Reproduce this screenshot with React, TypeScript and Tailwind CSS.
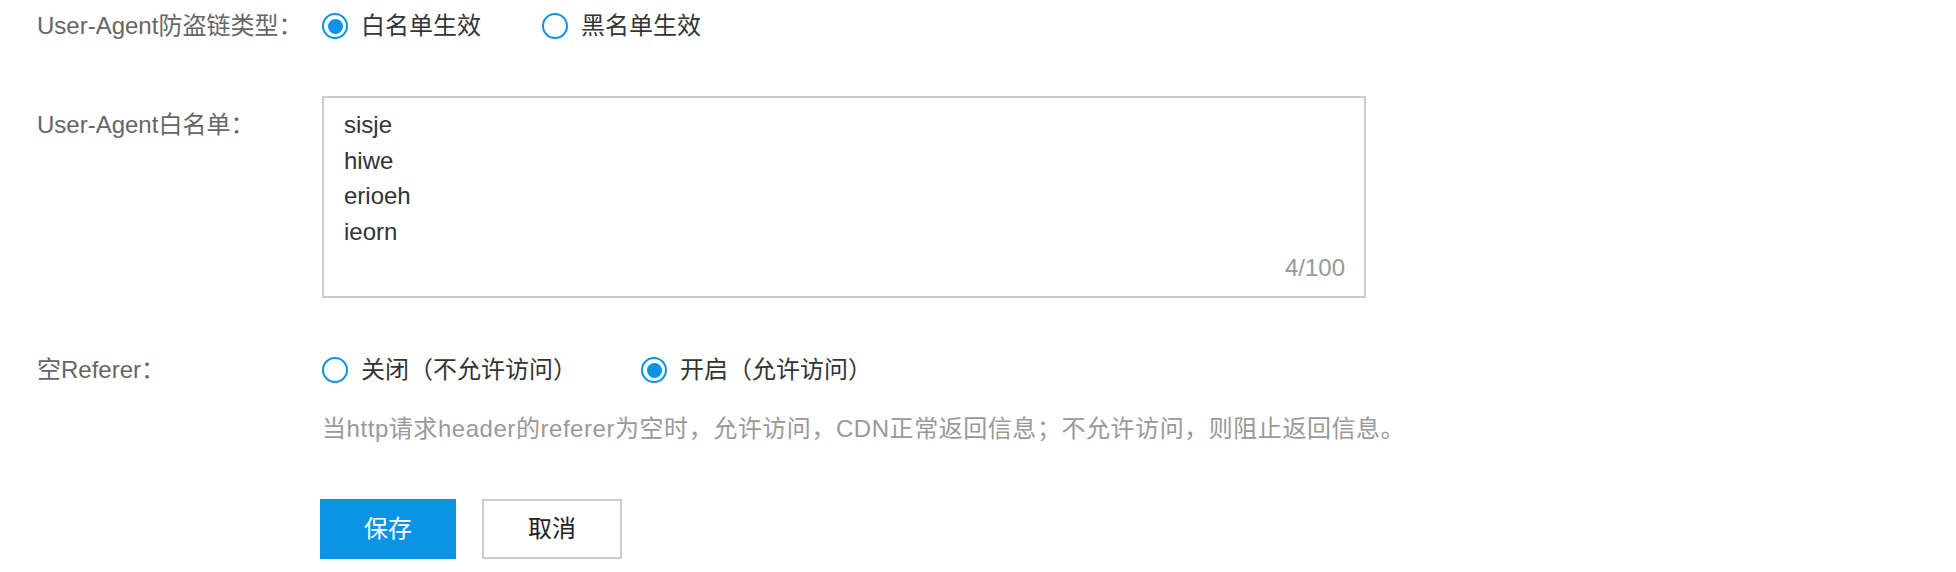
import { useState } from 'react';

const Radio = ({ checked, label, onClick }: { checked: boolean; label: string; onClick: () => void }) => (
  <label className="flex items-center cursor-pointer" onClick={onClick}>
    <span className="w-[26px] h-[26px] rounded-full border-2 border-[#0b93e6] flex items-center justify-center bg-white">
      {checked && <span className="w-[15px] h-[15px] rounded-full bg-[#0b93e6]" />}
    </span>
    <span className="ml-[13px] text-[#333]">{label}</span>
  </label>
);

export default function App() {
  const [uaType, setUaType] = useState<'white' | 'black'>('white');
  const [emptyRef, setEmptyRef] = useState<'off' | 'on'>('on');
  const list = 'sisje\nhiwe\nerioeh\nieorn';

  return (
    <div className="bg-white w-[1956px] h-[572px] pl-[37px] pt-[8px] text-[24px] leading-[36px] font-['Liberation_Sans','Noto_Sans_CJK_SC',sans-serif]">
      {/* UA type */}
      <div className="flex items-center h-[36px]">
        <div className="w-[285px] text-[#666]">User-Agent防盗链类型：</div>
        <div className="flex items-center gap-[61px]">
          <Radio checked={uaType === 'white'} label="白名单生效" onClick={() => setUaType('white')} />
          <Radio checked={uaType === 'black'} label="黑名单生效" onClick={() => setUaType('black')} />
        </div>
      </div>

      {/* UA list */}
      <div className="flex mt-[52px]">
        <div className="w-[285px] pt-[11px] text-[#666]">User-Agent白名单：</div>
        <div className="relative w-[1044px] h-[202px]">
          <textarea
            readOnly
            value={list}
            className="w-full h-full border-2 border-[#cccccc] px-[20px] pt-[9px] text-[24px] leading-[35.5px] text-[#333] resize-none outline-none font-['Liberation_Sans','Noto_Sans_CJK_SC',sans-serif]"
          />
          <span className="absolute right-[21px] bottom-[16px] leading-[28px] text-[#999]">4/100</span>
        </div>
      </div>

      {/* empty referer */}
      <div className="flex items-center h-[36px] mt-[54px]">
        <div className="w-[285px] text-[#666]">空Referer：</div>
        <div className="flex items-center gap-[64px]">
          <Radio checked={emptyRef === 'off'} label="关闭（不允许访问）" onClick={() => setEmptyRef('off')} />
          <Radio checked={emptyRef === 'on'} label="开启（允许访问）" onClick={() => setEmptyRef('on')} />
        </div>
      </div>
      <div className="ml-[285px] mt-[23px] text-[#999] tracking-[0.55px]">
        当http请求header的referer为空时，允许访问，CDN正常返回信息；不允许访问，则阻止返回信息。
      </div>

      {/* actions */}
      <div className="flex ml-[283px] mt-[52px] gap-[26px]">
        <button className="w-[136px] h-[60px] bg-[#0b93e6] text-white">保存</button>
        <button className="w-[140px] h-[60px] border-2 border-[#cccccc] bg-white text-[#222]">取消</button>
      </div>
    </div>
  );
}
